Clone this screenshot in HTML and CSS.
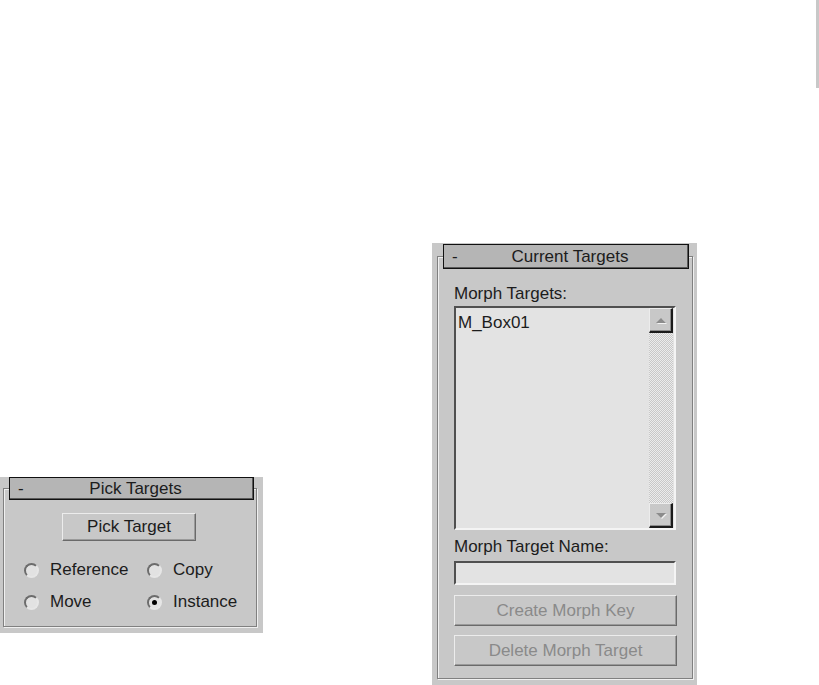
FILE: index.html
```html
<!DOCTYPE html>
<html>
<head>
<meta charset="utf-8">
<link rel="stylesheet" href="styles.css">
</head>
<body>
<div class="page">
  <section class="panel pick">
    <div class="rollout-head"><span class="minus">-</span><span class="title">Pick Targets</span></div>
    <div class="frame pick-frame">
      <div class="btn-row"><button class="btn pick-btn" type="button">Pick Target</button></div>
      <div class="radios">
        <label class="radio"><span class="dot"></span><span>Reference</span></label>
        <label class="radio"><span class="dot"></span><span>Copy</span></label>
        <label class="radio"><span class="dot"></span><span>Move</span></label>
        <label class="radio"><span class="dot on"></span><span>Instance</span></label>
      </div>
    </div>
  </section>

  <section class="panel current">
    <div class="rollout-head cur-head"><span class="minus">-</span><span class="title">Current Targets</span></div>
    <div class="frame cur-frame">
      <div class="label first">Morph Targets:</div>
      <div class="listbox">
        <div class="items"><div class="item">M_Box01</div></div>
        <div class="scrollbar">
          <div class="sbtn"><span class="arrow up"></span></div>
          <div class="track"></div>
          <div class="sbtn"><span class="arrow down"></span></div>
        </div>
      </div>
      <div class="label second">Morph Target Name:</div>
      <div class="input"></div>
      <button class="btn wide disabled" type="button">Create Morph Key</button>
      <button class="btn wide disabled second-btn" type="button">Delete Morph Target</button>
    </div>
  </section>

  <div class="edge"></div>
</div>
</body>
</html>
```

FILE: styles.css
```css
html, body {
  margin: 0;
  padding: 0;
  background: #ffffff;
}

.page {
  display: flex;
  align-items: flex-start;
  width: 819px;
  height: 685px;
  overflow: hidden;
  font-family: "Liberation Sans", Arial, sans-serif;
  font-size: 17px;
  color: #1c1c1c;
}

.panel {
  background: #c8c8c8;
  box-sizing: border-box;
  display: flex;
  flex-direction: column;
  align-items: flex-start;
}

.pick {
  margin-top: 477px;
  width: 263px;
  height: 156px;
}

.current {
  margin-left: 169px;
  margin-top: 243px;
  width: 265px;
  height: 442px;
}

.edge {
  margin-left: 119px;
  width: 3px;
  height: 88px;
  background: #c8c8c8;
}

/* rollout header */
.rollout-head {
  position: relative;
  z-index: 1;
  box-sizing: border-box;
  display: flex;
  align-items: center;
  margin-left: 9px;
  width: 245px;
  height: 23px;
  background: #b5b5b5;
  border: 1px solid #111111;
  box-shadow: inset -1px -1px 0 #5a5a5a;
  line-height: 20px;
}

.cur-head {
  margin-left: 11px;
  margin-top: 1px;
  width: 246px;
  height: 25px;
}

.minus {
  width: 0;
  padding-left: 8px;
  overflow: visible;
  white-space: nowrap;
}

.title {
  flex: 1;
  text-align: center;
}

/* etched group frame */
.frame {
  box-sizing: border-box;
  border: 1px solid #808080;
  box-shadow: 1px 1px 0 #f0f0f0, inset 1px 1px 0 #f0f0f0;
}

.pick-frame {
  margin-left: 3px;
  margin-top: -12px;
  width: 254px;
  height: 139px;
  padding-top: 24px;
}

.btn-row {
  padding-left: 58px;
}

.btn {
  box-sizing: border-box;
  font-family: "Liberation Sans", Arial, sans-serif;
  font-size: 17px;
  background: #c8c8c8;
  border: 1px solid;
  border-color: #ececec #6a6a6a #6a6a6a #ececec;
  box-shadow: inset -1px -1px 0 #9a9a9a;
  padding: 0;
  margin: 0;
  color: #1c1c1c;
}

.pick-btn {
  width: 134px;
  height: 28px;
}

.radios {
  display: grid;
  grid-template-columns: 123px auto;
  grid-auto-rows: 32px;
  margin-top: 13px;
  padding-left: 20px;
}

.radio {
  display: flex;
  align-items: center;
  gap: 11px;
}

.dot {
  box-sizing: border-box;
  width: 15px;
  height: 15px;
  border-radius: 50%;
  border: 2px solid;
  border-color: #6c6c6c #e6e6e6 #e6e6e6 #6c6c6c;
  background: #e2e2e2;
  display: flex;
  align-items: center;
  justify-content: center;
}

.dot.on::after {
  content: "";
  width: 5px;
  height: 5px;
  border-radius: 50%;
  background: #000000;
}

/* current targets */
.cur-frame {
  margin-left: 5px;
  margin-top: -13px;
  width: 256px;
  height: 423px;
  padding-left: 16px;
  padding-top: 27px;
  display: flex;
  flex-direction: column;
  align-items: flex-start;
}

.label {
  line-height: 20px;
  height: 20px;
}

.listbox {
  box-sizing: border-box;
  margin-top: 2px;
  width: 222px;
  height: 224px;
  background: #e3e3e3;
  border: 2px solid;
  border-color: #505050 #f4f4f4 #f4f4f4 #505050;
  display: flex;
}

.items {
  flex: 1;
  padding: 5px 0 0 2px;
}

.item {
  line-height: 20px;
}

.scrollbar {
  width: 24px;
  display: flex;
  flex-direction: column;
  margin-right: 1px;
}

.sbtn {
  box-sizing: border-box;
  height: 25px;
  background: #c8c8c8;
  border-style: solid;
  border-width: 1px 2px 2px 1px;
  border-color: #ececec #1a1a1a #1a1a1a #ececec;
  box-shadow: inset -1px -1px 0 #8a8a8a;
  display: flex;
  align-items: center;
  justify-content: center;
}

.arrow {
  width: 0;
  height: 0;
  border-left: 5px solid transparent;
  border-right: 5px solid transparent;
  filter: drop-shadow(1px 1px 0 #f2f2f2);
}

.arrow.up {
  border-bottom: 5px solid #8c8c8c;
}

.arrow.down {
  border-top: 5px solid #8c8c8c;
}

.track {
  flex: 1;
  background: repeating-conic-gradient(#c8c8c8 0 25%, #ececec 0 50%) 0 0 / 2px 2px;
}

.second {
  margin-top: 7px;
}

.input {
  box-sizing: border-box;
  margin-top: 4px;
  width: 222px;
  height: 24px;
  background: #e3e3e3;
  border: 2px solid;
  border-color: #505050 #f4f4f4 #f4f4f4 #505050;
}

.wide {
  width: 223px;
  height: 31px;
  margin-top: 10px;
}

.disabled {
  color: #8a8a8a;
}

.second-btn {
  margin-top: 9px;
}
```
